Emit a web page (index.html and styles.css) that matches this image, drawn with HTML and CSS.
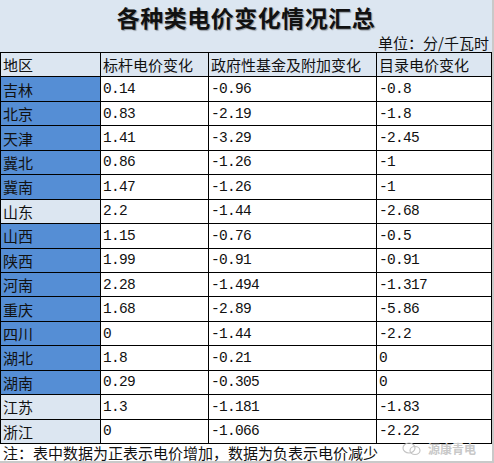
FILE: index.html
```html
<!DOCTYPE html>
<html lang="zh">
<head>
<meta charset="utf-8">
<link rel="stylesheet" href="styles.css">
</head>
<body>
<div class="sheet">
  <div class="titlebar">
    <div class="title">各种类电价变化情况汇总</div>
    <div class="unit">单位：分/千瓦时</div>
  </div>
  <div class="grid">
    <div class="c hd">地区</div><div class="c hd">标杆电价变化</div><div class="c hd">政府性基金及附加变化</div><div class="c hd">目录电价变化</div>
    <div class="c rg">吉林</div><div class="c n">0.14</div><div class="c n">-0.96</div><div class="c n">-0.8</div>
    <div class="c rg">北京</div><div class="c n">0.83</div><div class="c n">-2.19</div><div class="c n">-1.8</div>
    <div class="c rg">天津</div><div class="c n">1.41</div><div class="c n">-3.29</div><div class="c n">-2.45</div>
    <div class="c rg">冀北</div><div class="c n">0.86</div><div class="c n">-1.26</div><div class="c n">-1</div>
    <div class="c rg">冀南</div><div class="c n">1.47</div><div class="c n">-1.26</div><div class="c n">-1</div>
    <div class="c rl">山东</div><div class="c n">2.2</div><div class="c n">-1.44</div><div class="c n">-2.68</div>
    <div class="c rg">山西</div><div class="c n">1.15</div><div class="c n">-0.76</div><div class="c n">-0.5</div>
    <div class="c rg">陕西</div><div class="c n">1.99</div><div class="c n">-0.91</div><div class="c n">-0.91</div>
    <div class="c rg">河南</div><div class="c n">2.28</div><div class="c n">-1.494</div><div class="c n">-1.317</div>
    <div class="c rg">重庆</div><div class="c n">1.68</div><div class="c n">-2.89</div><div class="c n">-5.86</div>
    <div class="c rg">四川</div><div class="c n">0</div><div class="c n">-1.44</div><div class="c n">-2.2</div>
    <div class="c rg">湖北</div><div class="c n">1.8</div><div class="c n">-0.21</div><div class="c n">0</div>
    <div class="c rg">湖南</div><div class="c n">0.29</div><div class="c n">-0.305</div><div class="c n">0</div>
    <div class="c rl">江苏</div><div class="c n">1.3</div><div class="c n">-1.181</div><div class="c n">-1.83</div>
    <div class="c rl">浙江</div><div class="c n">0</div><div class="c n">-1.066</div><div class="c n">-2.22</div>
  </div>
  <div class="footer">注：表中数据为正表示电价增加，数据为负表示电价减少</div>
  <div class="watermark">
    <svg class="wm-icon" width="20" height="14" viewBox="0 0 20 14"><ellipse cx="7" cy="6" rx="6" ry="5" fill="none" stroke="#c4c4c4" stroke-width="1.2"/><ellipse cx="13" cy="8.5" rx="5" ry="4" fill="none" stroke="#c4c4c4" stroke-width="1.2"/></svg>
    <span>源康青电</span>
  </div>
</div>
</body>
</html>
```
FILE: styles.css
```css
html, body {
  margin: 0;
  padding: 0;
  background: #ffffff;
}
body {
  width: 494px;
  height: 463px;
  overflow: hidden;
  font-family: "Noto Sans CJK SC", "Noto Sans", sans-serif;
}
.sheet {
  position: relative;
  width: 492px;
  height: 461px;
  border-right: 2px solid #c9c9c9;
  border-bottom: 2px solid #c9c9c9;
  background: #ffffff;
}
.titlebar {
  height: 52px;
  background: #dce6f1;
  display: flex;
  flex-direction: column;
}
.title {
  height: 33px;
  line-height: 34px;
  text-align: center;
  font-size: 23px;
  font-weight: 700;
  color: #111;
  text-shadow: 1px 1px 1px rgba(0,0,0,0.35);
  letter-spacing: 0.5px;
}
.unit {
  height: 19px;
  line-height: 19px;
  text-align: right;
  font-size: 15px;
  color: #111;
  padding-right: 3px;
}
.grid {
  display: grid;
  grid-template-columns: 100px 108px 168px 115px;
  grid-template-rows: repeat(16, 24.4375px);
  border-top: 1px solid #000;
  border-left: 1px solid #000;
}
.c {
  box-sizing: border-box;
  border-right: 1px solid #000;
  border-bottom: 1px solid #000;
  display: flex;
  align-items: center;
  padding-left: 2px;
  font-size: 15px;
  color: #111;
  white-space: nowrap;
  overflow: hidden;
}
.hd {
  background: #dce6f1;
}
.rg {
  background: #558ed5;
}
.rl {
  background: #dce6f1;
}
.n {
  background: #ffffff;
  font-family: "Liberation Mono", "DejaVu Sans Mono", monospace;
  font-size: 14.5px;
  letter-spacing: -0.7px;
  padding-left: 2px;
}
.footer {
  height: 17px;
  line-height: 17px;
  font-size: 15px;
  padding-left: 3px;
  color: #111;
  white-space: nowrap;
}
.watermark {
  position: absolute;
  left: 402px;
  top: 440px;
  display: flex;
  align-items: center;
  gap: 6px;
  color: #c8c8c8;
  font-size: 12px;
  font-weight: 700;
}
```
